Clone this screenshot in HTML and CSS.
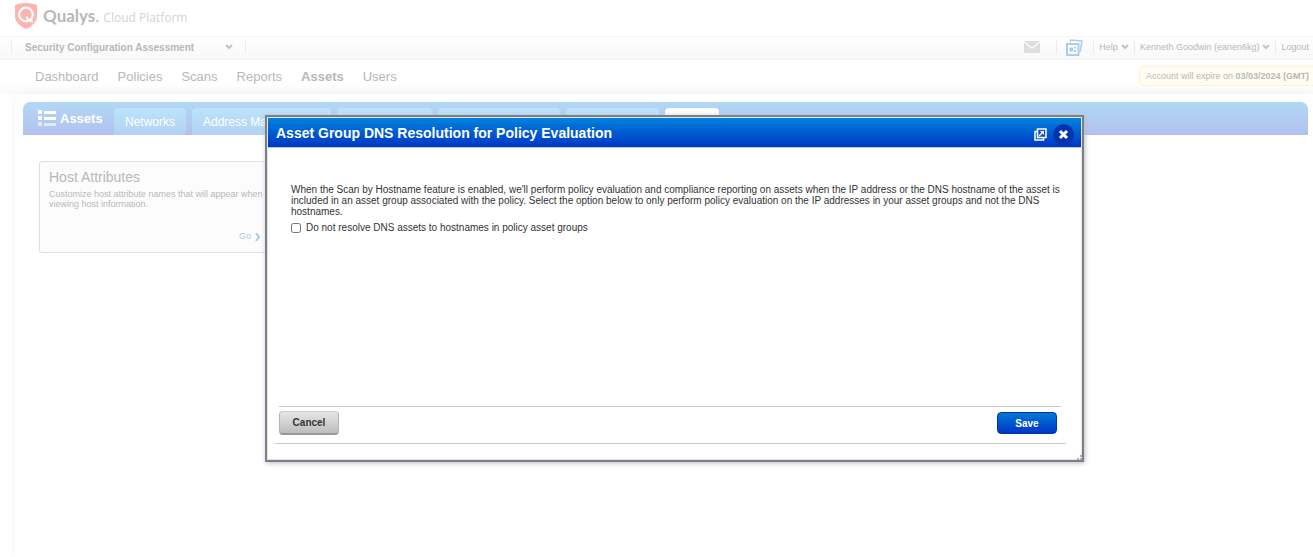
FILE: index.html
```html
<!DOCTYPE html>
<html lang="en">
<head>
<meta charset="utf-8">
<title>Qualys Cloud Platform</title>
<link rel="stylesheet" href="styles.css">
</head>
<body>
<div class="page">
  <header class="brand">
    <svg class="brand-mark" viewBox="0 0 22 26" width="22" height="26"><path d="M11 0C7 0 3 .7 0 2v11c0 6 5 10.500 11 13 6-2.500 11-7 11-13V2C19 .7 15 0 11 0z" fill="#ffb3b1"/><circle cx="11" cy="11.500" r="6.800" fill="none" stroke="#fff" stroke-width="2.200"/><path d="M11.500 13.500c1 3 3 5 6.500 5" fill="none" stroke="#fff" stroke-width="2"/></svg>
    <span class="brand-name">Qualys<span class="brand-dot">.</span></span>
    <span class="brand-sub">Cloud Platform</span>
  </header>
  <div class="toolbar">
    <button class="module" type="button">Security Configuration Assessment
      <svg viewBox="0 0 8 6" width="8" height="6"><path d="M1 1l3 3 3-3" class="chev"/></svg>
    </button>
    <div class="tools">
      <button class="tool mail" type="button"><svg viewBox="0 0 16 12" width="16" height="12"><path d="M0 0h16v12H0z" fill="#dedede"/><path d="M0 1l8 6 8-6" fill="none" stroke="#fafafa" stroke-width="1.500"/></svg></button>
      <button class="tool cards" type="button"><svg viewBox="0 0 17 17" width="17" height="17"><path d="M4 3l1-2 11 1-2 11" fill="none" stroke="#abcdec" stroke-width="1.500"/><path d="M1 5h11.500v11H1z" fill="#fff" stroke="#abcdec" stroke-width="2"/><path d="M3.500 8.500h3.500v4H3.500zM8 7.500h2v2H8zM8 11h2v2H8z" fill="#abcdec"/></svg></button>
      <button class="tool help" type="button">Help <svg viewBox="0 0 8 6" width="8" height="6"><path d="M1 1l3 3 3-3" class="chev"/></svg></button>
      <button class="tool user" type="button">Kenneth Goodwin (eanen6kg) <svg viewBox="0 0 8 6" width="8" height="6"><path d="M1 1l3 3 3-3" class="chev"/></svg></button>
      <a class="tool logout" href="#">Logout</a>
    </div>
  </div>
  <div class="navrow">
    <nav class="nav">
      <a href="#">Dashboard</a>
      <a href="#">Policies</a>
      <a href="#">Scans</a>
      <a href="#">Reports</a>
      <a href="#" class="current">Assets</a>
      <a href="#">Users</a>
    </nav>
    <div class="expiry">Account will expire on <b>03/03/2024 (GMT)</b></div>
  </div>
  <main class="content">
    <div class="tabbar">
      <h1 class="section"><svg viewBox="0 0 18 16" width="18" height="16"><path d="M0 0h4v4H0zM6 1h12v3H6zM0 6h4v4H0zM6 7h12v3H6z" fill="#fff"/><path d="M0 12h4v4H0zM6 13h12v3H6z" fill="#fff" opacity=".6"/></svg>Assets</h1>
      <button class="tab" type="button">Networks</button>
      <button class="tab tab-139" type="button">Address Ma</button>
      <button class="tab tab-96" type="button"></button>
      <button class="tab tab-122" type="button"></button>
      <button class="tab tab-94" type="button"></button>
      <button class="tab tab-active" type="button"></button>
    </div>
    <section class="card">
      <h2>Host Attributes</h2>
      <p>Customize host attribute names that will appear when viewing host information.</p>
      <a class="go" href="#">Go <svg viewBox="0 0 6 8" width="6" height="8"><path d="M1 0l3 4-3 4" fill="none" stroke="#b0c8e0" stroke-width="2"/></svg></a>
    </section>
  </main>
</div>

<div class="dialog" role="dialog" aria-labelledby="dialog-title">
  <header class="dialog-head">
    <h2 id="dialog-title">Asset Group DNS Resolution for Policy Evaluation</h2>
    <div class="dialog-tools">
      <button class="icon-button" type="button"><svg viewBox="0 0 13 13" width="13" height="13"><path d="M3.500 1H12v8.500H3.500z" fill="#0a50c4" stroke="#fff" stroke-width="1.500"/><path d="M3 3.500H1V12h8.500v-2" fill="none" stroke="#fff" stroke-width="1.500"/><path d="M5 8l4-4" stroke="#fff" stroke-width="1.500"/><path d="M6 3h4v4z" fill="#fff"/></svg></button>
      <button class="icon-button" type="button"><svg viewBox="0 0 21 21" width="21" height="21"><circle cx="10.500" cy="10.500" r="10.300" fill="#0433ac"/><path d="M7 7l7 7M14 7l-7 7" stroke="#fff" stroke-width="3"/></svg></button>
    </div>
  </header>
  <div class="dialog-body">
    <p>When the Scan by Hostname feature is enabled, we'll perform policy evaluation and compliance reporting on assets when the IP address or the DNS hostname of the asset is included in an asset group associated with the policy. Select the option below to only perform policy evaluation on the IP addresses in your asset groups and not the DNS hostnames.</p>
    <label class="option"><input type="checkbox"> Do not resolve DNS assets to hostnames in policy asset groups</label>
  </div>
  <footer class="dialog-foot">
    <div class="actions">
      <button class="btn" type="button">Cancel</button>
      <button class="btn btn-primary" type="button">Save</button>
    </div>
  </footer>
  <svg class="grip" viewBox="0 0 5 5" width="5" height="5"><path d="M3 0h2v2H3zM0 3h2v2H0zM3 3h2v2H3z" fill="#aaa"/></svg>
</div>
</body>
</html>
```
FILE: styles.css
```css
* { box-sizing: border-box; }
body {
  margin: 0;
  background: #fff;
  color: #b8b8b8;
  font: 10px/11px "Liberation Sans", Arial, sans-serif;
}
h1, h2, p { margin: 0; }
a { color: inherit; text-decoration: none; }
button {
  margin: 0;
  padding: 0;
  border: 0;
  background: none;
  color: inherit;
  font: inherit;
}
svg { display: block; flex: none; }
.chev { fill: none; stroke: #c4c4c4; stroke-width: 2; }

.page { display: flex; flex-direction: column; min-height: 100vh; overflow: hidden; }
.brand { display: flex; align-items: center; height: 36px; padding: 0 15px 4px; }
.brand-name { margin-left: 6px; font: bold 17px/20px Lato, sans-serif; color: #b8b8b8; }
.brand-dot { font-weight: 400; }
.brand-sub { margin: 4px 0 0 4px; font: 12px/16px "Open Sans", sans-serif; color: #d2d4d8; }

.toolbar {
  display: flex;
  justify-content: space-between;
  align-items: center;
  height: 24px;
  padding-bottom: 2px;
  border-top: 1px solid #f4f4f4;
  border-bottom: 1px solid #f4f4f4;
  background: linear-gradient(#fff, #f8f8f8);
}
.module {
  display: flex;
  align-items: center;
  gap: 31px;
  height: 12px;
  margin-left: 11px;
  padding: 0 12px 0 13px;
  border: 1px solid #ebebeb;
  border-width: 0 1px;
  font-weight: bold;
}
.tools { display: flex; align-items: center; }
.tool { display: flex; align-items: center; gap: 3px; height: 13px; padding: 0 5px; font-size: 9px; border-left: 1px solid #ebebeb; }
.mail { padding-right: 16px; border-left: 0; }
.cards { padding: 0 10px 0 9px; }
.logout { padding-right: 4px; }

.navrow { display: flex; justify-content: space-between; height: 34px; background: linear-gradient(#fff 24px, #fafafa); }
.nav { display: flex; gap: 19px; padding: 9px 0 0 35px; font-size: 13px; line-height: 15px; }
.current { font-weight: bold; }
.expiry {
  height: 20px;
  margin-top: 6px;
  padding: 4px 4px 4px 6px;
  border: 1px solid #fff0cf;
  border-right: 0;
  border-radius: 4px 0 0 4px;
  background: #fffdf1;
  font-size: 9px;
  line-height: 10px;
}

.content {
  flex: 1;
  margin-left: 15px;
  padding: 8px 5px 0 8px;
  border-radius: 8px 0 0 0;
  background: #fff;
  box-shadow: 0 0 10px #f2f2f2;
}
.tabbar {
  display: flex;
  align-items: flex-end;
  gap: 6px;
  height: 33px;
  border-radius: 7px 7px 0 0;
  background: linear-gradient(#b2d8f4, #b2c1ef);
  color: #fff;
}
.section { display: flex; align-items: center; gap: 4px; width: 85px; height: 33px; padding: 0 0 1px 15px; font-size: 13px; line-height: 15px; }
.tab {
  height: 27px;
  padding: 1px 11px 0;
  border-radius: 4px 4px 0 0;
  background: linear-gradient(#bce3fc, #b2d2f2);
  font-size: 12px;
  text-align: left;
}
.tab-139 { width: 139px; }
.tab-96 { width: 95px; }
.tab-122 { width: 122px; }
.tab-94 { width: 93px; }
.tab-active { width: 54px; background: #fff; }

.card {
  display: flex;
  flex-direction: column;
  width: 240px;
  height: 92px;
  margin: 26px 0 0 16px;
  padding: 7px 9px 10px;
  border: 1px solid #dedede;
  border-radius: 3px;
  background: #fcfcfc;
}
.card h2 { font-size: 14px; line-height: 16px; font-weight: 400; }
.card p { margin-top: 4px; font-size: 9px; line-height: 10px; }
.go { display: flex; align-items: center; gap: 4px; margin: auto 8px 0 auto; color: #b0c8e0; font-size: 9px; }

.dialog {
  position: absolute;
  top: 115px;
  left: 265px;
  display: flex;
  flex-direction: column;
  width: 819px;
  min-height: 347px;
  border: 2px solid #7c8086;
  outline: 1px solid #dfe6ee;
  outline-offset: -3px;
  padding: 1px;
  background: #fff;
  color: #333;
  box-shadow: 1px 1px 5px #bbb;
}
.dialog-head {
  display: flex;
  align-items: center;
  height: 30px;
  padding: 0 7px 0 8px;
  border-bottom: 1px solid #bcc8e6;
  background: linear-gradient(#0082de, #0036c4);
  color: #fff;
}
.dialog-head h2 { flex: 1; font-size: 14px; line-height: 16px; }
.dialog-tools { display: flex; align-items: center; gap: 6px; padding-top: 4px; }
.dialog-body { flex: 1; padding: 36px 15px 0 23px; }
.option { display: flex; align-items: center; gap: 5px; margin-top: 5px; }
.option input { width: 10px; height: 10px; margin: 0; }
.dialog-foot { margin: 0 15px 15px 7px; border-bottom: 1px solid #c8c8c8; }
.actions {
  display: flex;
  justify-content: space-between;
  align-items: center;
  margin: 0 5px 0 4px;
  padding: 4px 4px 8px 0;
  border-top: 1px solid #c8c8c8;
}
.btn {
  width: 60px;
  height: 24px;
  border: 1px solid #b4b4b4;
  border-top-color: #ccc;
  border-bottom: 2px solid #999;
  border-radius: 4px;
  background: linear-gradient(#e6e6e6, #bdbdbd);
  font-weight: bold;
}
.btn-primary { height: 22px; border: 1px solid #0434a4; background: linear-gradient(#0078d8, #0036c4); color: #fff; }
.grip { position: absolute; right: 0; bottom: 0; }
```
